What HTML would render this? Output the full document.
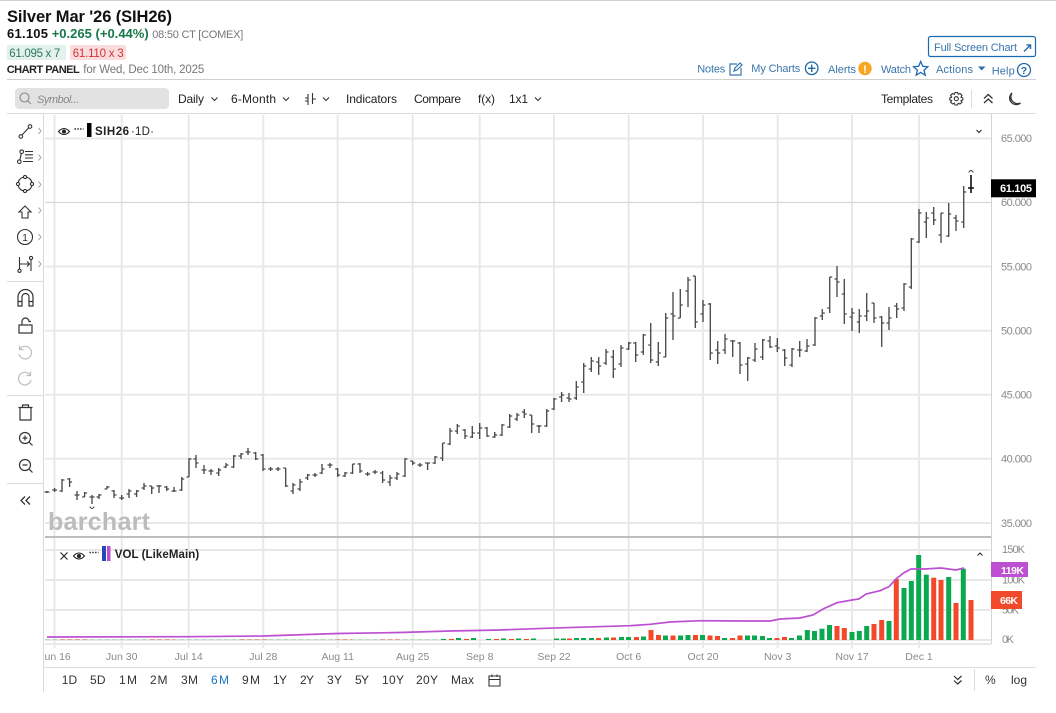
<!DOCTYPE html>
<html><head><meta charset="utf-8"><title>Silver Mar '26 (SIH26)</title>
<style>
html,body{margin:0;padding:0;background:#fff;width:1056px;height:713px;overflow:hidden}
svg{display:block}
text{font-family:"Liberation Sans",sans-serif}
.ax{font-size:11px;fill:#8a8a8a}
.tm{font-size:10.5px;fill:#8a8a8a;text-anchor:middle}
.nav{font-size:11px;fill:#3a76ad}
.tb{font-size:12px;fill:#222}
.bt{font-size:12px;fill:#333}
.ic{fill:none;stroke:#333;stroke-width:1.1}
</style></head><body>
<svg width="1056" height="713" viewBox="0 0 1056 713" xmlns="http://www.w3.org/2000/svg">
<rect width="1056" height="713" fill="#fff"/>
<rect width="1056" height="1" fill="#cfcfcf"/>

<!-- header -->
<text x="7" y="22" font-size="16.5" font-weight="bold" fill="#111" textLength="165">Silver Mar '26 (SIH26)</text>
<text x="7" y="38" font-size="13" font-weight="bold" fill="#111" textLength="41">61.105</text>
<text x="51.7" y="38" font-size="13" font-weight="bold" fill="#17784a" textLength="97">+0.265 (+0.44%)</text>
<text x="152.3" y="38" font-size="11" fill="#777" textLength="91">08:50 CT [COMEX]</text>
<rect x="6.7" y="45" width="59.3" height="15" rx="2" fill="#e3f0ec"/>
<text x="9.3" y="57" font-size="11.5" fill="#2d7a5d" textLength="51">61.095 x 7</text>
<rect x="70" y="45" width="56" height="15" rx="2" fill="#f9dcdc"/>
<text x="72.7" y="57" font-size="11.5" fill="#d3323a" textLength="51">61.110 x 3</text>
<text x="6.7" y="73" font-size="11" font-weight="bold" fill="#222" textLength="73">CHART PANEL</text>
<text x="83.3" y="73" font-size="11.5" fill="#777" textLength="121">for Wed, Dec 10th, 2025</text>

<rect x="928.5" y="36.5" width="107" height="20" rx="2" fill="#fff" stroke="#1a6bb0" stroke-width="1.2"/>
<text x="934" y="51" class="nav" textLength="83">Full Screen Chart</text>
<path d="M1024 51.5 L1030 45.5 M1026.5 45 H1030.5 V49" fill="none" stroke="#2f6fa8" stroke-width="1.5"/>

<text x="697.3" y="72.5" class="nav" textLength="28">Notes</text>
<path d="M737 64 H730 V75 H741 V68 M734 71 L735 68 L740 63 L742 65 L737 70 Z" fill="none" stroke="#3a76ad" stroke-width="1.2"/>
<text x="751.3" y="72" class="nav" textLength="49">My Charts</text>
<circle cx="811.7" cy="68.3" r="6.3" fill="none" stroke="#1f69ab" stroke-width="1.3"/>
<path d="M808 68.3 H815.4 M811.7 64.6 V72" stroke="#1f69ab" stroke-width="1.4"/>
<text x="828" y="73" class="nav" textLength="28">Alerts</text>
<circle cx="865" cy="68.5" r="6.7" fill="#f5a623"/>
<text x="865" y="73" font-size="11" font-weight="bold" fill="#fff" text-anchor="middle">!</text>
<text x="881" y="73" class="nav" textLength="30">Watch</text>
<path d="M920.7 61.5 L922.8 66.3 L927.8 66.8 L924 70.2 L925.2 75.2 L920.7 72.5 L916.2 75.2 L917.4 70.2 L913.6 66.8 L918.6 66.3 Z" fill="none" stroke="#1f69ab" stroke-width="1.3"/>
<text x="936" y="73" class="nav" textLength="37">Actions</text>
<path d="M978 66.5 H985.5 L981.7 70.5 Z" fill="#2f6fa8"/>
<text x="991.7" y="74.5" class="nav" textLength="23">Help</text>
<circle cx="1024" cy="70" r="6.5" fill="none" stroke="#1f69ab" stroke-width="1.3"/>
<text x="1024" y="74" font-size="10.5" font-weight="bold" fill="#1f69ab" text-anchor="middle">?</text>

<rect x="7" y="79" width="1029" height="1" fill="#cfcfcf"/>

<!-- toolbar -->
<rect x="15" y="88" width="154" height="21" rx="4" fill="#e2e2e2"/>
<circle cx="24.5" cy="97.5" r="4.5" fill="none" stroke="#8a8a8a" stroke-width="1.1"/>
<path d="M27.8 101 L31 104" stroke="#8a8a8a" stroke-width="1.1"/>
<text x="37" y="103" font-size="11" font-style="italic" fill="#888" textLength="42">Symbol...</text>
<text x="178" y="103" class="tb" textLength="26">Daily</text>
<path class="ic" d="M211.5 97.5 L214.5 100.5 L217.5 97.5 M283 97.5 L286 100.5 L289 97.5 M323 97.5 L326 100.5 L329 97.5 M535 97.5 L538 100.5 L541 97.5"/>
<text x="231" y="103" class="tb" textLength="45">6-Month</text>
<path class="ic" d="M308 94 V105 M305 98 H308 M312.5 93 V104 M312.5 99 H316 M305 101 H308"/>
<text x="346" y="103" class="tb" textLength="51">Indicators</text>
<text x="414" y="103" class="tb" textLength="47">Compare</text>
<text x="478" y="103" class="tb" textLength="17">f(x)</text>
<text x="509" y="103" class="tb" textLength="19">1x1</text>
<text x="881" y="103" class="tb" textLength="52">Templates</text>
<circle cx="956.3" cy="98.7" r="2" class="ic"/>
<path class="ic" d="M955 92.5 H957.6 L958.2 94.3 L960 93.5 L962 95.3 L961 97.2 L962.8 98 V100 L961 100.6 L962 102.3 L960 104 L958.2 103.2 L957.6 105 H955 L954.4 103.2 L952.6 104 L950.6 102.3 L951.6 100.6 L949.8 100 V98 L951.6 97.2 L950.6 95.3 L952.6 93.5 L954.4 94.3 Z"/>
<rect x="971" y="90" width="1" height="18" fill="#ddd"/>
<path d="M984 98.5 L988.3 94.5 L992.5 98.5 M984 103 L988.3 99 L992.5 103" fill="none" stroke="#333" stroke-width="1.3"/>
<path d="M1012 93 A6.5 6.5 0 1 0 1020.5 103 A6.8 6.8 0 0 1 1012 93 Z" fill="none" stroke="#333" stroke-width="1.3"/>
<rect x="7" y="113" width="1029" height="1" fill="#dcdcdc"/>

<!-- grid -->
<g stroke="#e8e8e8" stroke-width="1.9" fill="none">
<path d="M54.5 115V648M121.7 115V648M188.7 115V648M263.3 115V648M337.6 115V648M412.7 115V648M479.7 115V648M554 115V648M628.7 115V648M703 115V648M777.7 115V648M852 115V648M919 115V648"/>
<path d="M45 138.5H991M45 266.5H991M45 330.7H991M45 394.7H991M45 458.7H991M45 523H991M45 550H991M45 580H991M45 610H991M45 640H991M45 644H991"/>
</g>
<path d="M45 202.5H991" stroke="#d8d8d8" stroke-width="1.3"/>
<rect x="45" y="536" width="946" height="2" fill="#bdbdbd"/>
<rect x="43" y="114" width="1" height="578" fill="#d9d9d9"/>
<rect x="991" y="114" width="1" height="530" fill="#d4d4d4"/>

<text x="48" y="530" font-size="25" font-weight="bold" fill="#bcbcbc" textLength="102">barchart</text>

<!-- price bars -->
<path fill="none" stroke="#4a4a4a" stroke-width="1.35" d="M47 491V493M44.5 492H47M47 492H49.5M54.6 488V492M52.1 490H54.6M54.6 490H57.1M62 479V492M59.5 491H62M62 480H64.5M69.6 478V487M67.1 479H69.6M69.6 482H72.1M77 491V500M74.5 495H77M77 495H79.5M84.6 492V497M82.1 497H84.6M84.6 493H87.1M92 495V504M89.5 497H92M92 497H94.5M99 494V499M96.5 497H99M99 495H101.5M107 486V489M104.5 489H107M107 487H109.5M114 490V498M111.5 491H114M114 495H116.5M121.7 495V500M119.2 498H121.7M121.7 498H124.2M129 489V498M126.5 494H129M129 491H131.5M136.6 490V497M134.1 494H136.6M136.6 491H139.1M144 483V490M141.5 488H144M144 486H146.5M151.7 486V494M149.2 486H151.7M151.7 488H154.2M159 485V493M156.5 486H159M159 486H161.5M166.7 486V491M164.2 487H166.7M166.7 489H169.2M174 487V492M171.5 491H174M174 491H176.5M181.7 477V491M179.2 490H181.7M181.7 479H184.2M189 458V477M186.5 477H189M189 459H191.5M196 455V468M193.5 459H196M196 463H198.5M204 465V474M201.5 470H204M204 470H206.5M211 469V475M208.5 471H211M211 471H213.5M218.7 468V476M216.2 473H218.7M218.7 470H221.2M226 463V468M223.5 467H226M226 465H228.5M233.7 455V468M231.2 467H233.7M233.7 456H236.2M241 453V459M238.5 456H241M241 454H243.5M248 448V455M245.5 452H248M248 452H250.5M255.7 452V460M253.2 453H255.7M255.7 459H258.2M263 454V471M260.5 455H263M263 469H265.5M270.6 467V471M268.1 469H270.6M270.6 469H273.1M278 467V471M275.5 469H278M278 469H280.5M285.7 468V487M283.2 468H285.7M285.7 486H288.2M293 483V494M290.5 491H293M293 485H295.5M300 479V491M297.5 489H300M300 482H302.5M307.6 474V480M305.1 478H307.6M307.6 475H310.1M315 473V477M312.5 475H315M315 475H317.5M322 464V474M319.5 473H322M322 469H324.5M330 463V468M327.5 465H330M330 465H332.5M337.7 468V477M335.2 469H337.7M337.7 475H340.2M345 472V477M342.5 476H345M345 473H347.5M352.6 464V474M350.1 473H352.6M352.6 464H355.1M360 463V473M357.5 464H360M360 471H362.5M367.6 472V476M365.1 474H367.6M367.6 474H370.1M375 470V474M372.5 472H375M375 472H377.5M382.6 471V483M380.1 473H382.6M382.6 480H385.1M390 475V486M387.5 482H390M390 478H392.5M397 472V480M394.5 478H397M397 474H399.5M405 458V477M402.5 476H405M405 459H407.5M412.7 461V465M410.2 461H412.7M412.7 463H415.2M420 463V467M417.5 465H420M420 465H422.5M427.6 463V470M425.1 463H427.6M427.6 463H430.1M435 456V464M432.5 463H435M435 457H437.5M442.6 443V461M440.1 458H442.6M442.6 443H445.1M450 428V445M447.5 444H450M450 431H452.5M457.3 424V434M454.8 431H457.3M457.3 426H459.8M465 429V439M462.5 430H465M465 436H467.5M472.3 426V438M469.8 437H472.3M472.3 433H474.8M479.7 423V439M477.2 433H479.7M479.7 428H482.2M487 427V437M484.5 428H487M487 436H489.5M494.7 432V438M492.2 437H494.7M494.7 435H497.2M502 424V436M499.5 435H502M502 425H504.5M509.7 414V428M507.2 427H509.7M509.7 416H512.2M517 413V421M514.5 419H517M517 415H519.5M524.3 409V418M521.8 412H524.3M524.3 414H526.8M531.7 415V433M529.2 415H531.7M531.7 424H534.2M539 425V433M536.5 426H539M539 426H541.5M546.7 409V427M544.2 426H546.7M546.7 411H549.2M554 398V410M551.5 409H554M554 399H556.5M561.6 392V402M559.1 397H561.6M561.6 395H564.1M569 393V402M566.5 398H569M569 399H571.5M576.3 381V400M573.8 398H576.3M576.3 387H578.8M583.7 363V393M581.2 382H583.7M583.7 366H586.2M591.3 357V372M588.8 369H591.3M591.3 361H593.8M598.7 357V375M596.2 362H598.7M598.7 366H601.2M606 349V365M603.5 363H606M606 352H608.5M613.3 350V378M610.8 357H613.3M613.3 369H615.8M621 345V367M618.5 364H621M621 348H623.5M628.7 342V350M626.2 349H628.7M628.7 343H631.2M635.7 342V362M633.2 343H635.7M635.7 355H638.2M643.3 334V355M640.8 352H643.3M643.3 335H645.8M650.7 323V363M648.2 345H650.7M650.7 360H653.2M658.3 342V366M655.8 362H658.3M658.3 353H660.8M665.7 313V357M663.2 357H665.7M665.7 318H668.2M673 292V340M670.5 314H673M673 316H675.5M680.3 289V318M677.8 318H680.3M680.3 305H682.8M688 277V307M685.5 291H688M688 280H690.5M695.3 276V328M692.8 276H695.3M695.3 322H697.8M703 300V322M700.5 314H703M703 305H705.5M710.3 303V360M707.8 304H710.3M710.3 353H712.8M717.7 341V364M715.2 350H717.7M717.7 353H720.2M725 334V354M722.5 350H725M725 339H727.5M732.7 340V357M730.2 341H732.7M732.7 341H735.2M740 342V374M737.5 343H740M740 365H742.5M747.7 357V381M745.2 364H747.7M747.7 358H750.2M755 343V362M752.5 360H755M755 349H757.5M762.7 339V360M760.2 357H762.7M762.7 340H765.2M770 336V348M767.5 341H770M770 347H772.5M777.3 338V352M774.8 346H777.3M777.3 348H779.8M784.7 349V366M782.2 350H784.7M784.7 358H787.2M792 348V367M789.5 365H792M792 349H794.5M799.7 341V357M797.2 350H799.7M799.7 350H802.2M807 339V352M804.5 351H807M807 346H809.5M815 317V346M812.5 345H815M815 318H817.5M822.3 309V320M819.8 316H822.3M822.3 313H824.8M829.7 277V313M827.2 308H829.7M829.7 277H832.2M837 266V297M834.5 279H837M837 282H839.5M844.3 279V324M841.8 294H844.3M844.3 314H846.8M852 308V331M849.5 317H852M852 313H854.5M859.3 309V333M856.8 322H859.3M859.3 316H861.8M866.7 293V321M864.2 316H866.7M866.7 311H869.2M874 303V323M871.5 303H874M874 318H876.5M881.7 316V347M879.2 317H881.7M881.7 323H884.2M889 307V330M886.5 323H889M889 318H891.5M896.7 303V318M894.2 306H896.7M896.7 309H899.2M904 283V311M901.5 308H904M904 284H906.5M911.3 238V289M908.8 287H911.3M911.3 239H913.8M919 209V243M916.5 242H919M919 213H921.5M926.3 212V238M923.8 222H926.3M926.3 218H928.8M933.7 207V225M931.2 213H933.7M933.7 220H936.2M941 213V243M938.5 235H941M941 213H943.5M948.7 203V237M946.2 236H948.7M948.7 214H951.2M956 215V231M953.5 218H956M956 221H958.5M963.7 186V228M961.2 222H963.7M963.7 192H966.2"/>
<path d="M971 175V193M968 188H974" fill="none" stroke="#111" stroke-width="1.6"/>
<path d="M968.7 172.5 Q971 168.5 973.3 172.5 M89.7 506.5 Q92 510.5 94.3 506.5" fill="none" stroke="#444" stroke-width=".9"/>

<!-- volume -->
<path d="M45 639.5H440" stroke="#7ccb9c" stroke-width="1" stroke-dasharray="5 2.45" opacity=".45"/>
<path d="M60 639.5H90M150 639.5H175M240 639.5H270M335 639.5H352M380 639.5H400" stroke="#f0907a" stroke-width="1" stroke-dasharray="5 2.45" opacity=".7"/>
<g fill="#0aa84f">
<rect x="441" y="639" width="5" height="1"/><rect x="456" y="638" width="5" height="2"/><rect x="471" y="638" width="5" height="2"/><rect x="486" y="639" width="5" height="1"/><rect x="501" y="638.5" width="5" height="1.5"/><rect x="516" y="638.5" width="5" height="1.5"/><rect x="531" y="638.5" width="5" height="1.5"/><rect x="554" y="638.5" width="5" height="1.5"/><rect x="561" y="638.5" width="5" height="1.5"/><rect x="574" y="638" width="5" height="2"/><rect x="581" y="638" width="5" height="2"/><rect x="589" y="638" width="5" height="2"/><rect x="604" y="637.5" width="5" height="2.5"/><rect x="619" y="637" width="5" height="3"/><rect x="626" y="637" width="5" height="3"/><rect x="641" y="636.5" width="5" height="3.5"/>
<rect x="663" y="635.5" width="5" height="4.5"/><rect x="678" y="635.5" width="5" height="4.5"/><rect x="685.5" y="635" width="5" height="5"/><rect x="700" y="635" width="5" height="5"/><rect x="722" y="638" width="5" height="2"/><rect x="745" y="635.5" width="5" height="4.5"/><rect x="752" y="635.5" width="5" height="4.5"/><rect x="760" y="636" width="5" height="4"/><rect x="767" y="638" width="5" height="2"/><rect x="789" y="638" width="5" height="2"/><rect x="797" y="635.5" width="5" height="4.5"/>
<rect x="804.8" y="630" width="5" height="10"/><rect x="812" y="631" width="5" height="9"/><rect x="819.5" y="628.7" width="5" height="11.3"/><rect x="827" y="625" width="5" height="15"/><rect x="849.5" y="632" width="5" height="8"/><rect x="856.8" y="631" width="5" height="9"/><rect x="864.2" y="626" width="5" height="14"/><rect x="886.5" y="621" width="5" height="19"/><rect x="901.5" y="588" width="5" height="52"/><rect x="908.8" y="581" width="5" height="59"/><rect x="916.2" y="555" width="5" height="85"/><rect x="923.8" y="574.7" width="5" height="65.3"/><rect x="946.2" y="577" width="5" height="63"/><rect x="960.8" y="568.7" width="5" height="71.3"/>
</g>
<g fill="#f2492b">
<rect x="449" y="639" width="5" height="1"/><rect x="464" y="639" width="5" height="1"/><rect x="494" y="639" width="5" height="1"/><rect x="509" y="639" width="5" height="1"/><rect x="524" y="639" width="5" height="1"/><rect x="567" y="638.5" width="5" height="1.5"/><rect x="596" y="638" width="5" height="2"/><rect x="611" y="637.5" width="5" height="2.5"/><rect x="634" y="637" width="5" height="3"/>
<rect x="648.5" y="630" width="5" height="10"/><rect x="656" y="635" width="5" height="5"/><rect x="670.5" y="635.5" width="5" height="4.5"/><rect x="693" y="635" width="5" height="5"/><rect x="707.5" y="635.5" width="5" height="4.5"/><rect x="715" y="636" width="5" height="4"/><rect x="730" y="638" width="5" height="2"/><rect x="737.5" y="635.5" width="5" height="4.5"/><rect x="774.5" y="638" width="5" height="2"/><rect x="782" y="637" width="5" height="3"/><rect x="834.5" y="626" width="5" height="14"/><rect x="841.8" y="628" width="5" height="12"/><rect x="871.5" y="624" width="5" height="16"/><rect x="879.2" y="620" width="5" height="20"/><rect x="893.8" y="579" width="5" height="61"/><rect x="931.2" y="577.7" width="5" height="62.3"/><rect x="938.5" y="580" width="5" height="60"/><rect x="953.5" y="603" width="5" height="37"/><rect x="968.5" y="600" width="5" height="40"/>
</g>
<path d="M47 637 L188 636.7 L263 636 L338 633.5 L400 632.5 L450 631 L500 630 L545 628.3 L630 625.7 L650 624.3 L670 622 L700 620.7 L740 621 L770 621 L780 619 L800 618 L813 615 L823 609 L837 602.7 L852 600 L859 599 L866 594 L880 590.7 L889 586.7 L896 579 L904 572.7 L911 569 L925 569 L941 568 L956 570 L964 568" fill="none" stroke="#bd4fd1" stroke-width="1.7"/>

<!-- legends -->
<g fill="none" stroke="#222" stroke-width="1.1">
<path d="M58.5 131.5 Q64 125.5 69.5 131.5 Q64 137.5 58.5 131.5 Z"/>
<path d="M73.5 556 Q79 550 84.5 556 Q79 562 73.5 556 Z"/>
<path d="M60.5 552.5 L67.5 559.5 M67.5 552.5 L60.5 559.5"/>
<path d="M976.5 130 L979 132.5 L981.5 130 M977.5 555.5 L980 553 L982.5 555.5" stroke-width="1"/>
</g>
<circle cx="64" cy="131.5" r="2" fill="#222"/><circle cx="79" cy="556" r="2" fill="#222"/>
<path d="M74.5 129H83.5M89.5 552.5H98.5" stroke="#222" stroke-width="1.4" stroke-dasharray="1.4 1.4"/>
<rect x="87" y="123" width="4.5" height="14" fill="#000"/>
<text x="95" y="135" font-size="11.5" font-weight="bold" fill="#222" textLength="34">SIH26</text>
<text x="131" y="135" font-size="11.5" fill="#222" textLength="23">·1D·</text>
<rect x="102" y="546" width="4" height="15" fill="#2648b8"/><rect x="107" y="546" width="3.5" height="15" fill="#bd4fd1"/>
<text x="114.7" y="558" font-size="11.5" font-weight="bold" fill="#222" textLength="84.5">VOL (LikeMain)</text>

<!-- axis labels -->
<text x="1001" y="142" class="ax" textLength="31">65.000</text>
<text x="1001" y="206" class="ax" textLength="31">60.000</text>
<text x="1001" y="270.5" class="ax" textLength="31">55.000</text>
<text x="1001" y="334.7" class="ax" textLength="31">50.000</text>
<text x="1001" y="398.7" class="ax" textLength="31">45.000</text>
<text x="1001" y="462.7" class="ax" textLength="31">40.000</text>
<text x="1001" y="527" class="ax" textLength="31">35.000</text>
<text x="1002" y="553" class="ax" textLength="23">150K</text>
<text x="1002" y="583.5" class="ax" textLength="23">100K</text>
<text x="1002" y="613.5" class="ax" textLength="17">50K</text>
<text x="1002" y="643" class="ax" textLength="12">0K</text>
<rect x="991" y="179.3" width="45" height="18" fill="#000"/>
<text x="1000" y="192" font-size="11" font-weight="bold" fill="#fff" textLength="32">61.105</text>
<rect x="991" y="562" width="37" height="15" fill="#bd4fd1"/>
<text x="1001" y="574" font-size="10.5" font-weight="bold" fill="#fff" textLength="23">119K</text>
<rect x="991" y="591" width="31" height="18" fill="#f2492b"/>
<text x="1000" y="604" font-size="10.5" font-weight="bold" fill="#fff" textLength="18">66K</text>

<text x="55" y="660" class="tm">Jun 16</text><text x="121.7" y="660" class="tm">Jun 30</text><text x="188.7" y="660" class="tm">Jul 14</text><text x="263.3" y="660" class="tm">Jul 28</text><text x="337.7" y="660" class="tm">Aug 11</text><text x="412.7" y="660" class="tm">Aug 25</text><text x="479.7" y="660" class="tm">Sep 8</text><text x="554" y="660" class="tm">Sep 22</text><text x="628.7" y="660" class="tm">Oct 6</text><text x="703" y="660" class="tm">Oct 20</text><text x="777.7" y="660" class="tm">Nov 3</text><text x="852" y="660" class="tm">Nov 17</text><text x="919" y="660" class="tm">Dec 1</text>

<!-- sidebar -->
<rect x="0" y="114" width="43" height="580" fill="#fff"/>
<rect x="43" y="114" width="1" height="578" fill="#d9d9d9"/>
<rect x="7" y="281" width="36" height="1" fill="#dcdcdc"/><rect x="7" y="395" width="36" height="1" fill="#dcdcdc"/><rect x="7" y="483" width="36" height="1" fill="#dcdcdc"/>
<path d="M38.5 128 L41 131 L38.5 134 M38.5 154.5 L41 157.5 L38.5 160.5 M38.5 181.5 L41 184.5 L38.5 187.5 M38.5 207.5 L41 210.5 L38.5 213.5 M38.5 234 L41 237 L38.5 240 M38.5 261 L41 264 L38.5 267" fill="none" stroke="#aaa" stroke-width="1"/>
<g class="ic">
<circle cx="20.8" cy="136.5" r="1.8"/><circle cx="30" cy="126.5" r="1.8"/><path d="M22 135 L28.8 127.8"/>
<circle cx="19.3" cy="161.7" r="1.8"/><circle cx="21.7" cy="151.7" r="1.8"/><path d="M19.8 160 L21.3 153.5 M25 151.5 H33 M25 154.8 H33 M25 158 H33 M23 161.5 H33"/>
<circle cx="25" cy="184" r="7"/><g fill="#fff"><circle cx="25" cy="177" r="1.6"/><circle cx="25" cy="191" r="1.6"/><circle cx="18" cy="184" r="1.6"/><circle cx="32" cy="184" r="1.6"/></g>
<path d="M25 206 L31 212 H28 V218 H22 V212 H19 Z"/>
<circle cx="25" cy="237" r="7.5"/>
<path d="M19.5 257 V269 M20 264 H29.5 M27 261.5 L29.5 264 L27 266.5 M31 260 V271"/><circle cx="19.5" cy="270.8" r="1.6"/><circle cx="31" cy="258" r="1.6"/>
<path d="M18 306 V297 A7.5 7.5 0 0 1 33 297 V306 H29 V297 A3.5 3.5 0 0 0 22 297 V306 Z M18 301.5 H22 M29 301.5 H33" stroke-width="1.2"/>
<rect x="19" y="325" width="13" height="8" stroke-width="1.2"/><path d="M22 325 V321.5 A3.5 3.5 0 0 1 29 321.5 H31" stroke-width="1.2"/>
<path d="M20 407.5 H31 V420 H20 Z M18.5 407.5 H32.5 M22.5 407 V405 H28.5 V407" stroke-width="1.2"/>
<circle cx="25" cy="438" r="5.5" stroke-width="1.2"/><path d="M29 442 L32.5 445.5 M22.5 438 H27.5 M25 435.5 V440.5" stroke-width="1.2"/>
<circle cx="25" cy="465" r="5.5" stroke-width="1.2"/><path d="M29 469 L32.5 472.5 M22.5 465 H27.5" stroke-width="1.2"/>
<path d="M25 496.5 L21 500.5 L25 504.5 M30 496.5 L26 500.5 L30 504.5" stroke-width="1.3"/>
</g>
<text x="25" y="241" font-size="10.5" fill="#333" text-anchor="middle">1</text>
<path d="M20 349 A6.3 6.3 0 1 1 19 354 M19.5 345.5 V349.5 H23.5" fill="none" stroke="#bdbdbd" stroke-width="1.2"/>
<path d="M30 375 A6.3 6.3 0 1 0 31 380 M30.5 371.5 V375.5 H26.5" fill="none" stroke="#bdbdbd" stroke-width="1.2"/>

<!-- bottom bar -->
<rect x="43" y="667" width="993" height="1" fill="#dcdcdc"/>
<text x="61.7" y="684" class="bt" textLength="15.5">1D</text>
<text x="90" y="684" class="bt" textLength="15.5">5D</text>
<text x="119" y="684" class="bt" textLength="18">1M</text>
<text x="150" y="684" class="bt" textLength="17.5">2M</text>
<text x="181" y="684" class="bt" textLength="17">3M</text>
<text x="211" y="684" font-size="12" fill="#1a73c0" textLength="18">6M</text>
<text x="242" y="684" class="bt" textLength="18">9M</text>
<text x="273" y="684" class="bt" textLength="14">1Y</text>
<text x="300" y="684" class="bt" textLength="14">2Y</text>
<text x="327" y="684" class="bt" textLength="15">3Y</text>
<text x="355" y="684" class="bt" textLength="14">5Y</text>
<text x="382" y="684" class="bt" textLength="22">10Y</text>
<text x="416" y="684" class="bt" textLength="22">20Y</text>
<text x="451" y="684" class="bt" textLength="23">Max</text>
<path class="ic" d="M489 676 H500 V686 H489 Z M489 679.5 H500 M492 674.5 V677 M497 674.5 V677"/>
<path d="M954 676 L957.7 679.5 L961.5 676 M954 680.5 L957.7 684 L961.5 680.5" fill="none" stroke="#333" stroke-width="1.2"/>
<rect x="974" y="669" width="1" height="22" fill="#ddd"/>
<text x="985" y="684" class="bt" textLength="10">%</text>
<text x="1011" y="684" class="bt" textLength="16">log</text>
</svg>
</body></html>
